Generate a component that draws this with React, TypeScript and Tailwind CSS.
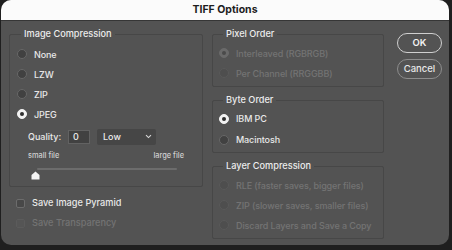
import type { ReactNode } from "react";

const font = { fontFamily: "Inter, 'Liberation Sans', sans-serif" };

const Radio = ({ label, checked, disabled, h = "h-[20px]" }: { label: string; checked?: boolean; disabled?: boolean; h?: string }) => {
  let circle = "bg-[#414141] border-[#676767]";
  if (checked && !disabled) circle = "bg-[#f2f2f2] border-[#f2f2f2]";
  if (checked && disabled) circle = "bg-[#6a6a6a] border-[#6a6a6a]";
  if (!checked && disabled) circle = "bg-[#4e4e4e] border-[#595959]";
  return (
    <div className={`flex items-center gap-[7px] ${h}`}>
      <span className={`w-[10px] h-[10px] rounded-full border flex items-center justify-center shrink-0 ${circle}`}>
        {checked && <span className={`w-[4px] h-[4px] rounded-full ${disabled ? "bg-[#4a4a4a]" : "bg-[#2e2e2e]"}`} />}
      </span>
      <span className={`text-[9px] font-medium tracking-[-0.1px] leading-none ${disabled ? "text-[#737373]" : "text-[#e8e8e8]"}`}>{label}</span>
    </div>
  );
};

const Group = ({ title, children, className = "", legendClass = "ml-[11px]" }: { title: string; children: ReactNode; className?: string; legendClass?: string }) => (
  <fieldset className={`border border-[#474747] rounded-[2px] m-0 p-0 min-w-0 ${className}`}>
    <legend className={`px-[3px] text-[9.2px] font-medium leading-[14px] text-[#ececec] ${legendClass}`}>{title}</legend>
    {children}
  </fieldset>
);

const Checkbox = ({ label, disabled }: { label: string; disabled?: boolean }) => (
  <div className="flex items-center gap-[7px] h-[20px] pl-[7px]">
    <span className={`w-[9px] h-[9px] rounded-[2px] border shrink-0 ${disabled ? "bg-[#555555] border-[#5b5b5b]" : "bg-[#484848] border-[#6c6c6c]"}`} />
    <span className={`text-[9.2px] font-medium leading-none ${disabled ? "text-[#737373]" : "text-[#e8e8e8]"}`}>{label}</span>
  </div>
);

export default function App() {
  return (
    <div className="w-[452px] h-[250px] bg-[#1f1f1f] overflow-hidden" style={font}>
      <div className="ml-[1px] w-[448px] h-[245px] rounded-[10px] bg-[#535353] overflow-hidden flex flex-col">
        <div className="h-[21px] bg-[#fbfbfb] border-b border-[#363636] flex items-center justify-center">
          <span className="text-[10.5px] font-bold text-[#1e1e1e]">TIFF Options</span>
        </div>

        <div className="flex pl-[8px] pt-[6px]">
          {/* left column */}
          <div className="w-[194px] flex flex-col">
            <Group title="Image Compression">
              <div className="pt-[3px] pb-[5px]">
                <div className="pl-[7px]">
                  <Radio label="None" />
                  <Radio label="LZW" />
                  <Radio label="ZIP" />
                  <Radio label="JPEG" checked />
                </div>
                <div className="mt-[4px] h-[17px] flex items-center pl-[18px]">
                  <span className="text-[9px] font-medium text-[#e8e8e8] w-[40px]">Quality:</span>
                  <div className="w-[22px] h-[14px] bg-[#414141] border border-[#626262] flex items-center pl-[4px]">
                    <span className="text-[9px] font-medium text-[#ececec] leading-none">0</span>
                  </div>
                  <div className="ml-[7px] w-[59px] h-[16px] rounded-[2px] bg-[#464646] flex items-center justify-between pl-[6px] pr-[4px]">
                    <span className="text-[9px] font-medium text-[#ececec] leading-none">Low</span>
                    <svg width="7" height="5" viewBox="0 0 7 5">
                      <path d="M1 1.2 L3.5 3.6 L6 1.2" fill="none" stroke="#d8d8d8" strokeWidth="1.1" />
                    </svg>
                  </div>
                </div>
                <div className="mt-[6px] h-[10px] flex items-center justify-between pl-[18px] pr-[18px]">
                  <span className="text-[7.4px] font-medium text-[#d0d0d0] leading-none">small file</span>
                  <span className="text-[7.4px] font-medium text-[#d0d0d0] leading-none">large file</span>
                </div>
                <div className="relative h-[20px] pl-[27px] pt-[7px]">
                  <div className="w-[140px] h-[2px] bg-[#6c6c6c] rounded-full" />
                  <svg className="absolute left-[21px] top-[10px]" width="9" height="9" viewBox="0 0 9 9">
                    <path d="M4.5 0.5 L8.5 4 L8.5 8.5 L0.5 8.5 L0.5 4 Z" fill="#f4f4f4" />
                  </svg>
                </div>
              </div>
            </Group>
            <div className="mt-[6px]">
              <Checkbox label="Save Image Pyramid" />
              <Checkbox label="Save Transparency" disabled />
            </div>
          </div>

          {/* right column */}
          <div className="ml-[9px] w-[172px] flex flex-col">
            <Group title="Pixel Order" legendClass="ml-[10px]">
              <div className="pt-[2px] pb-[3px] pl-[6px]">
                <Radio label="Interleaved (RGBRGB)" checked disabled />
                <Radio label="Per Channel (RRGGBB)" disabled />
              </div>
            </Group>
            <Group title="Byte Order" className="mt-[6px]" legendClass="ml-[10px]">
              <div className="pt-[1px] pb-[2px] pl-[6px]">
                <Radio label="IBM PC" checked h="h-[21px]" />
                <Radio label="Macintosh" h="h-[21px]" />
              </div>
            </Group>
            <Group title="Layer Compression" className="mt-[6px]" legendClass="ml-[10px]">
              <div className="pt-[2px] pb-[3px] pl-[6px]">
                <Radio label="RLE (faster saves, bigger files)" disabled />
                <Radio label="ZIP (slower saves, smaller files)" disabled />
                <Radio label="Discard Layers and Save a Copy" disabled />
              </div>
            </Group>
          </div>

          {/* buttons */}
          <div className="ml-[13px] w-[45px] flex flex-col gap-[6px] pt-[6px]">
            <button className="h-[20px] rounded-full border border-[#cfcfcf] text-[9.5px] font-semibold text-[#f2f2f2] flex items-center justify-center">
              OK
            </button>
            <button className="h-[20px] rounded-full border border-[#8d8d8d] text-[9.5px] font-medium text-[#e8e8e8] flex items-center justify-center">
              Cancel
            </button>
          </div>
        </div>
      </div>
    </div>
  );
}
